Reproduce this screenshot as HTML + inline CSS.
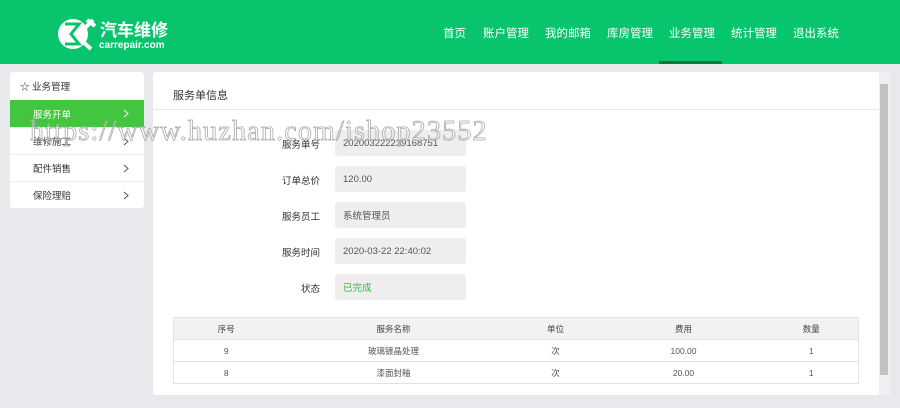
<!DOCTYPE html>
<html><head><meta charset="utf-8"><style>
*{margin:0;padding:0;box-sizing:border-box}
body{width:900px;height:408px;background:#e8e9ec;font-family:"Liberation Sans","Noto Sans CJK SC",sans-serif;font-size:10px;color:#333;position:relative;overflow:hidden}
.hd{position:absolute;left:0;top:0;width:900px;height:64px;background:#08c46c}
.logo{position:absolute;left:57px;top:16px}
.nav{position:absolute;top:25px;color:#fff;font-size:11.5px}
.act{position:absolute;left:659px;top:61px;width:63px;height:3px;background:#067a40}
.side{position:absolute;left:10px;top:72px;width:134px;height:136px;background:#fff;border-radius:3px}
.side div{position:absolute;left:0;width:134px;height:27px;display:flex;align-items:center;padding-left:23px;font-size:9.5px;border-top:1px solid #eee}
.side svg{position:absolute;right:15px;top:9px}
.main{position:absolute;left:153px;top:72px;width:737px;height:323px;background:#fff;border-radius:3px}
.lab{position:absolute;width:100px;text-align:right;font-size:9.5px}
.in{position:absolute;left:335px;width:131px;height:26px;background:#eee;border-radius:3px;display:flex;align-items:center;padding-left:8px;font-size:9.5px;color:#555}
table{position:absolute;left:173px;top:317px;width:686px;border-collapse:collapse;font-size:8.5px;color:#555}
td,th{border-top:1px solid #e2e2e2;height:22px;text-align:center;font-weight:normal}
th{background:#f2f2f2;color:#444}
table{border:1px solid #e2e2e2}
.wm{position:absolute;left:30px;top:116px;font-family:"Liberation Serif",serif;font-size:28px;color:rgba(255,255,255,.3);-webkit-text-stroke:0.8px #aaa;letter-spacing:1.2px;white-space:nowrap}
</style></head><body>
<div class="hd">
<svg class="logo" width="40" height="36" viewBox="0 0 40 36"><circle cx="16" cy="18" r="15" fill="#fff"/><path d="M8 8 L22 8 L14 18 L22 28 L8 28" fill="none" stroke="#08c46c" stroke-width="3"/><path d="M26 14 L36 4 M30 4 L38 10 M24 24 L34 33" stroke="#fff" stroke-width="4"/></svg>
<div style="position:absolute;left:100px;top:16px;color:#fff;font-size:17px;font-weight:bold">汽车维修</div>
<div style="position:absolute;left:99px;top:40px;color:#fff;font-size:10px;font-weight:bold">carrepair.com</div>
<span class="nav" style="left:443px">首页</span>
<span class="nav" style="left:483px">账户管理</span>
<span class="nav" style="left:545px">我的邮箱</span>
<span class="nav" style="left:607px">库房管理</span>
<span class="nav" style="left:669px">业务管理</span>
<span class="nav" style="left:731px">统计管理</span>
<span class="nav" style="left:793px">退出系统</span>
<div class="act"></div>
</div>
<div class="side">
<div style="top:0;border:none;padding-left:10px;height:28px">☆ 业务管理</div>
<div style="top:28px;background:#43c63f;color:#fff;border:none">服务开单<svg width="6" height="9"><path d="M1 1 L5 4.5 L1 8" fill="none" stroke="#fff" stroke-width="1"/></svg></div>
<div style="top:55px">维修施工<svg width="6" height="9"><path d="M1 1 L5 4.5 L1 8" fill="none" stroke="#555" stroke-width="1"/></svg></div>
<div style="top:82px">配件销售<svg width="6" height="9"><path d="M1 1 L5 4.5 L1 8" fill="none" stroke="#555" stroke-width="1"/></svg></div>
<div style="top:109px">保险理赔<svg width="6" height="9"><path d="M1 1 L5 4.5 L1 8" fill="none" stroke="#555" stroke-width="1"/></svg></div>
</div>
<div class="main">
<div style="position:absolute;left:20px;top:15px;font-size:11px">服务单信息</div>
<div style="position:absolute;left:0;top:37px;width:726px;height:1px;background:#e8e8e8"></div>
<div style="position:absolute;left:726px;top:0;width:11px;height:323px;background:#f0f0f0"></div>
<div style="position:absolute;left:727px;top:12px;width:8px;height:291px;background:#c1c1c1"></div>
</div>
<div class="lab" style="left:220px;top:137px">服务单号</div><div class="in" style="top:130px">202003222239168751</div>
<div class="lab" style="left:220px;top:173px">订单总价</div><div class="in" style="top:166px">120.00</div>
<div class="lab" style="left:220px;top:209px">服务员工</div><div class="in" style="top:202px">系统管理员</div>
<div class="lab" style="left:220px;top:245px">服务时间</div><div class="in" style="top:238px">2020-03-22 22:40:02</div>
<div class="lab" style="left:220px;top:281px">状态</div><div class="in" style="top:274px;color:#3bb54a">已完成</div>
<table>
<tr><th style="width:105px">序号</th><th style="width:230px">服务名称</th><th style="width:94px">单位</th><th style="width:162px">费用</th><th>数量</th></tr>
<tr><td>9</td><td>玻璃镀晶处理</td><td>次</td><td>100.00</td><td>1</td></tr>
<tr><td>8</td><td>漆面封釉</td><td>次</td><td>20.00</td><td>1</td></tr>
</table>
<div class="wm">https://www.huzhan.com/ishop23552</div>
</body></html>
